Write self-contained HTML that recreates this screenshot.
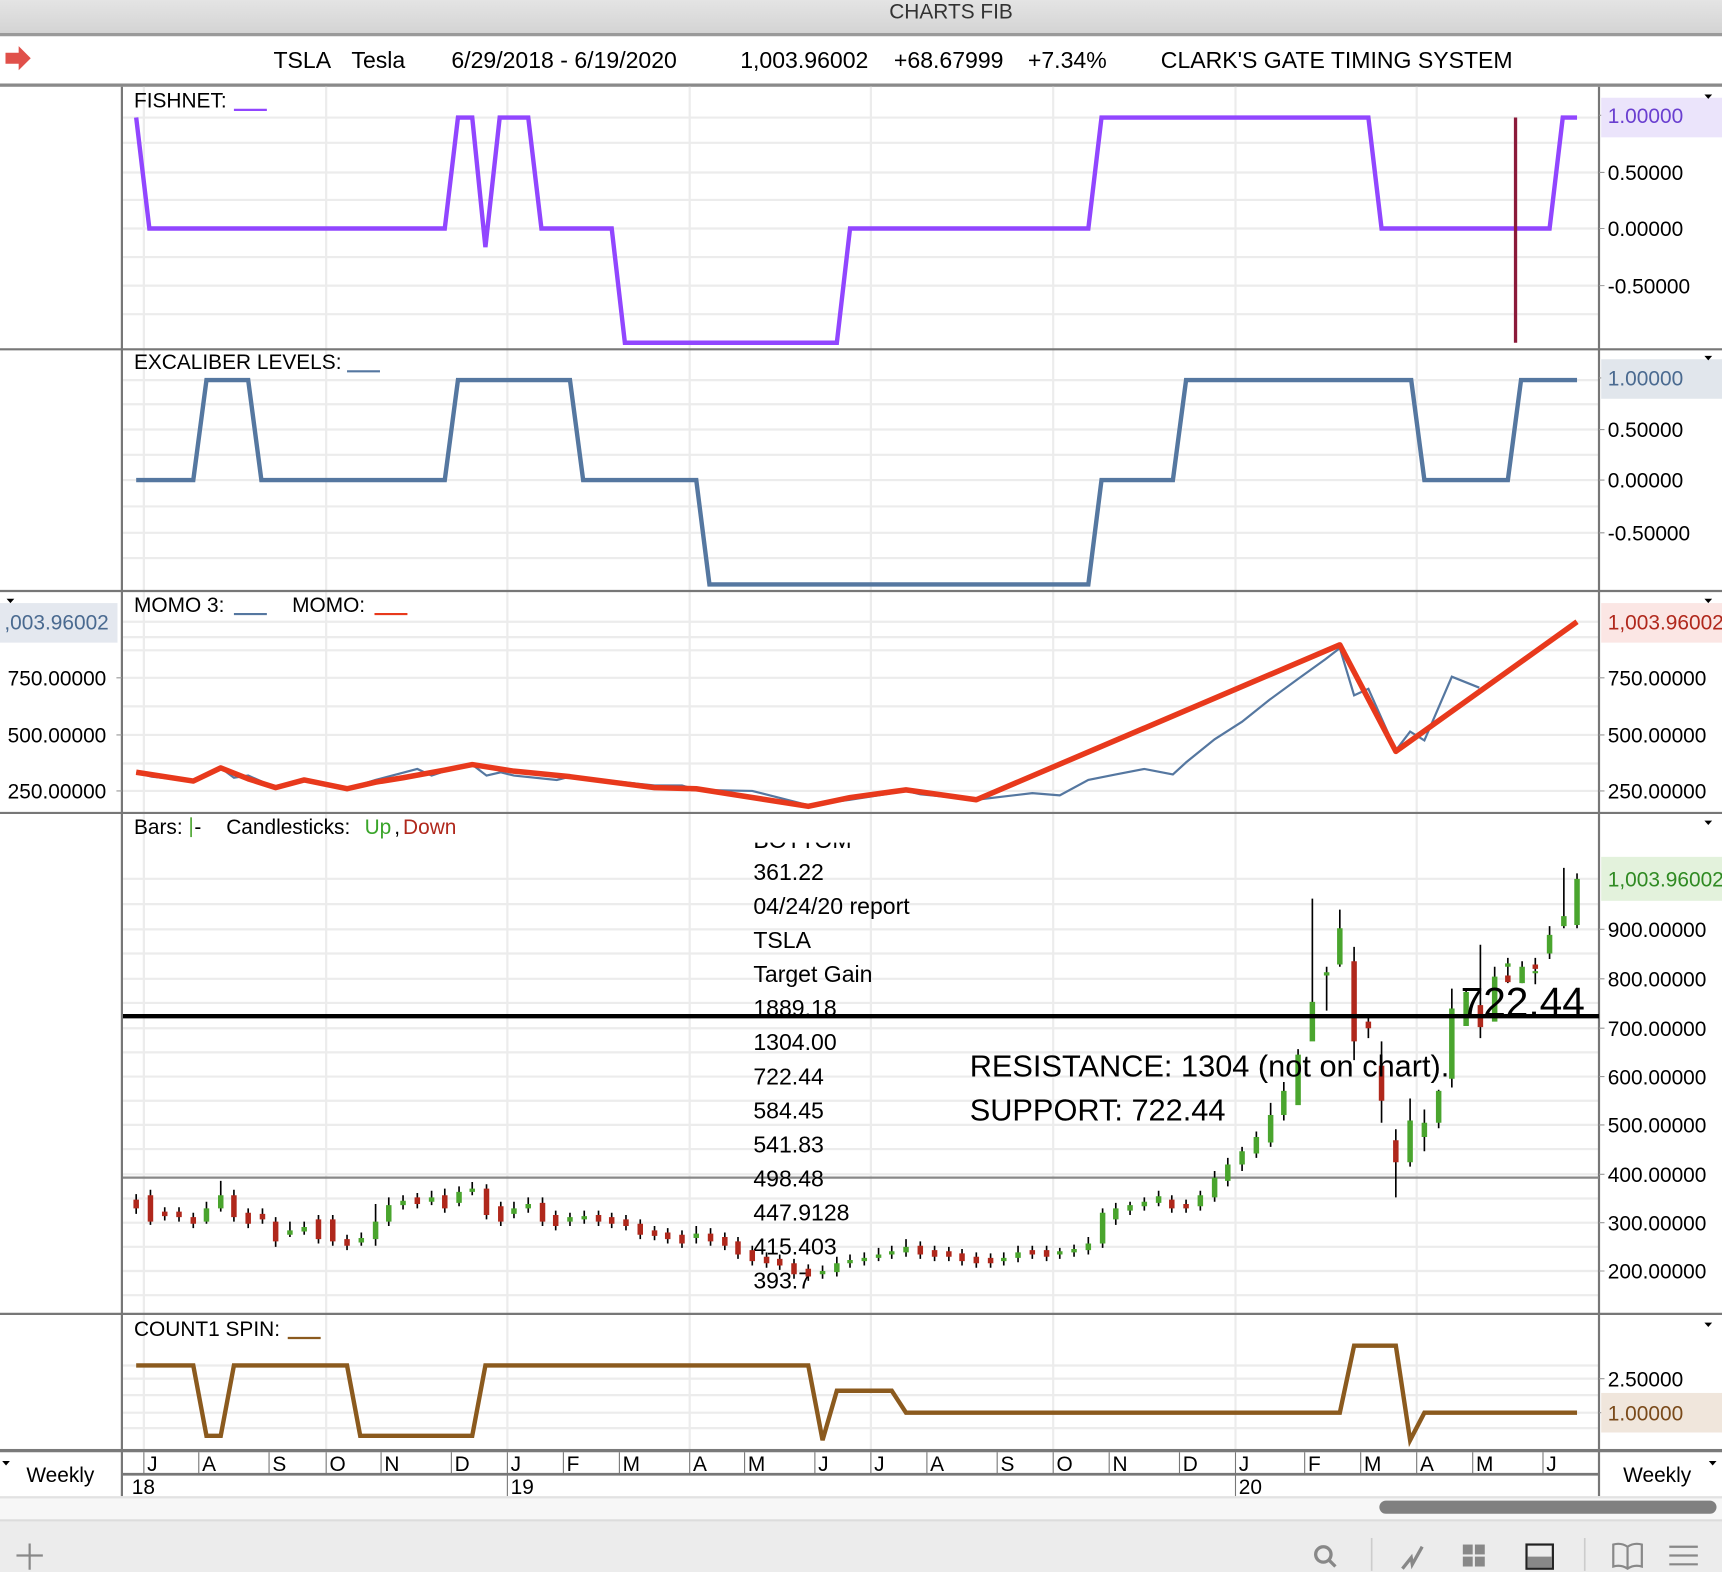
<!DOCTYPE html>
<html><head><meta charset="utf-8"><style>
html,body{margin:0;padding:0;background:#fff;overflow:hidden}
svg{display:block}
text{font-family:"Liberation Sans",Arial,sans-serif}
</style></head><body>
<svg width="1722" height="1572" viewBox="0 0 1568 1431" preserveAspectRatio="none" xmlns="http://www.w3.org/2000/svg">
<defs>
<clipPath id="pc"><rect x="112" y="767" width="1344" height="428"/></clipPath>
<linearGradient id="tb" x1="0" y1="0" x2="0" y2="1"><stop offset="0" stop-color="#e4e4e4"/><stop offset="1" stop-color="#d4d4d4"/></linearGradient>
</defs>
<!-- title bar -->
<rect x="0" y="0" width="1568" height="30" fill="url(#tb)"/>
<text x="866" y="17" font-size="19" text-anchor="middle" fill="#333">CHARTS FIB</text>
<rect x="0" y="30" width="1568" height="3" fill="#9a9a9a"/>
<!-- header -->
<path d="M5 48h12v-6l11 11-11 11v-6H5z" fill="#e0504a"/>
<g font-size="21" fill="#000">
<text x="249" y="62">TSLA</text><text x="320" y="62">Tesla</text>
<text x="411" y="62">6/29/2018 - 6/19/2020</text>
<text x="674" y="62">1,003.96002</text><text x="814" y="62">+68.67999</text><text x="936" y="62">+7.34%</text>
<text x="1057" y="62">CLARK'S GATE TIMING SYSTEM</text>
</g>
<rect x="0" y="76" width="1568" height="3" fill="#8a8a8a"/>

<!-- grid -->
<g stroke="#ececec" stroke-width="2">
<path d="M131 79V1320M297 79V1320M462 79V1320M628 79V1320M793 79V1320M959 79V1320M1125 79V1320M1290 79V1320"/>
<path d="M112 107H1456M112 130H1456M112 157H1456M112 182H1456M112 208H1456M112 234H1456M112 260H1456M112 286H1456M112 346H1456M112 368H1456M112 391H1456M112 414H1456M112 437H1456M112 461H1456M112 485H1456M112 508H1456M112 566H1456M112 580H1456M112 592H1456M112 617H1456M112 643H1456M112 669H1456M112 695H1456M112 720H1456"/>
<path d="M112 800H1456M112 823H1456M112 846H1456M112 868H1456M112 891H1456M112 913H1456M112 936H1456M112 958H1456M112 980H1456M112 1002H1456M112 1024H1456M112 1046H1456M112 1069H1456M112 1091H1456M112 1113H1456M112 1135H1456M112 1157H1456M112 1179H1456"/>
<path d="M112 1243H1456M112 1255H1456M112 1270H1456M112 1286H1456M112 1300H1456"/>
</g>

<!-- panel frames -->
<g stroke="#777" stroke-width="2" fill="none">
<path d="M111 79V1362M1456 79V1362"/>
<path d="M0 318H1568M0 538H1568M0 740H1568M0 1196H1568"/>
</g>
<rect x="0" y="1319" width="1568" height="3" fill="#7a7a7a"/>

<!-- right axis tick marks -->
<g stroke="#999" stroke-width="1"><path d="M1456 105h5M1456 157h5M1456 208h5M1456 260h5M1456 344h5M1456 391h5M1456 437h5M1456 485h5M1456 617h5M1456 669h5M1456 720h5M1456 846h5M1456 891h5M1456 936h5M1456 980h5M1456 1024h5M1456 1069h5M1456 1113h5M1456 1157h5M1456 1255h5M1456 1286h5M106 617h5M106 669h5M106 720h5"/></g>

<!-- Panel 1 -->
<text x="122" y="98" font-size="19">FISHNET:</text><path d="M213 100h30" stroke="#9146ff" stroke-width="2"/>
<polyline fill="none" stroke="#9146ff" stroke-width="4" points="124,107 136,208 405,208 417,107 430,107 442,225 455,107 481,107 493,208 557,208 569,312 762,312 774,208 991,208 1003,107 1246,107 1258,208 1411,208 1423,107 1436,107"/>
<path d="M1380 107V312" stroke="#8b1a3a" stroke-width="3"/>
<rect x="1458" y="89" width="110" height="36" fill="#ebe4fb"/>
<g font-size="19"><text x="1464" y="112" fill="#6a3fd0">1.00000</text><text x="1464" y="164">0.50000</text><text x="1464" y="215">0.00000</text><text x="1464" y="267">-0.50000</text></g>
<path d="M1552 86h7l-3.5 4z" fill="#000"/>

<!-- Panel 2 -->
<text x="122" y="336" font-size="19">EXCALIBER LEVELS:</text><path d="M316 338h30" stroke="#5577a0" stroke-width="2"/>
<polyline fill="none" stroke="#5577a0" stroke-width="4" points="124,437 176,437 188,346 226,346 238,437 405,437 417,346 519,346 531,437 634,437 646,532 991,532 1003,437 1068,437 1080,346 1285,346 1297,437 1373,437 1385,346 1436,346"/>
<rect x="1458" y="327" width="110" height="36" fill="#e1e6ec"/>
<g font-size="19"><text x="1464" y="351" fill="#4a6a90">1.00000</text><text x="1464" y="398">0.50000</text><text x="1464" y="444">0.00000</text><text x="1464" y="492">-0.50000</text></g>
<path d="M1552 324h7l-3.5 4z" fill="#000"/>

<!-- Panel 3 -->
<text x="122" y="557" font-size="19">MOMO 3:</text><path d="M213 559h30" stroke="#5577a0" stroke-width="2"/>
<text x="266" y="557" font-size="19">MOMO:</text><path d="M341 559h30" stroke="#e8391c" stroke-width="2"/>
<polyline fill="none" stroke="#5577a0" stroke-width="2" points="124,703 138,707 176,711 201,699 213,708 226,706 251,717 277,711 316,718 342,710 380,700 393,706 405,702 430,696 443,706 456,703 468,706 507,710 519,707 596,715 621,715 634,719 685,720 736,733 774,728 825,720 838,723 889,728 940,722 965,724 991,710 1016,705 1042,700 1068,705 1080,694 1106,673 1131,657 1156,637 1182,618 1207,600 1220,590 1233,633 1246,627 1271,683 1284,666 1297,674 1322,616 1347,626"/>
<polyline fill="none" stroke="#e8391c" stroke-width="5" stroke-linejoin="round" points="124,703 176,711 201,699 226,709 251,717 277,710 316,718 342,712 367,708 405,701 430,696 468,702 519,707 596,717 634,718 736,734 774,726 825,719 889,728 1220,587 1271,684 1436,566"/>
<rect x="0" y="549" width="107" height="36" fill="#e4e8ef"/>
<rect x="1458" y="549" width="110" height="36" fill="#fbe6e4"/>
<g font-size="19"><text x="4" y="573" fill="#4a6a90">,003.96002</text><text x="7" y="624">750.00000</text><text x="7" y="676">500.00000</text><text x="7" y="727">250.00000</text>
<text x="1464" y="573" fill="#b0281c">1,003.96002</text><text x="1464" y="624">750.00000</text><text x="1464" y="676">500.00000</text><text x="1464" y="727">250.00000</text></g>
<path d="M6 545h7l-3.5 4z M1552 545h7l-3.5 4z" fill="#000"/>

<!-- Panel 4 -->
<g font-size="19"><text x="122" y="759">Bars:</text><path d="M174 744v18" stroke="#4aa52e" stroke-width="1.5"/><text x="177" y="759">-</text>
<text x="206" y="759">Candlesticks:</text><text x="332" y="759" fill="#3aa52a">Up</text><text x="359" y="759">,</text><text x="367" y="759" fill="#b0281c">Down</text></g>
<path d="M1552 747h7l-3.5 4z" fill="#000"/>
<path d="M112 1072H1456" stroke="#888" stroke-width="2"/>
<g clip-path="url(#pc)" font-size="21">
<text x="686" y="772">BOTTOM</text><text x="686" y="801">361.22</text><text x="686" y="832">04/24/20 report</text><text x="686" y="863">TSLA</text><text x="686" y="894">Target Gain</text><text x="686" y="925">1889.18</text><text x="686" y="956">1304.00</text><text x="686" y="987">722.44</text><text x="686" y="1018">584.45</text><text x="686" y="1049">541.83</text><text x="686" y="1080">498.48</text><text x="686" y="1111">447.9128</text><text x="686" y="1142">415.403</text><text x="686" y="1173">393.7</text>
</g>
<!-- wicks -->
<path stroke="#000" stroke-width="1.5" fill="none" d="M124 1087v18M137 1083v32M150 1099v12M163 1099v13M176 1104v14M188 1094v20M201 1075v28M213 1083v29M226 1100v18M239 1100v14M251 1108v27M264 1112v14M277 1112v12M290 1106v26M303 1106v28M316 1124v14M329 1122v12M342 1096v38M354 1090v26M367 1088v13M380 1086v14M393 1084v13M405 1082v22M418 1080v18M430 1076v12M443 1078v32M456 1094v22M468 1094v15M481 1090v14M494 1090v26M506 1102v18M519 1104v12M532 1102v12M545 1102v14M557 1104v14M570 1106v14M583 1110v18M596 1116v13M608 1118v14M621 1120v16M634 1116v16M647 1118v16M660 1122v16M672 1126v20M685 1134v18M698 1140v14M710 1142v14M723 1146v18M736 1151v15M749 1152v12M762 1144v18M774 1142v12M787 1140v12M800 1136v12M812 1134v12M825 1128v16M838 1130v16M851 1134v14M864 1135v13M876 1137v15M889 1140v14M902 1141v13M914 1140v12M927 1134v15M940 1134v12M953 1134v14M965 1136v10M978 1133v11M991 1126v16M1004 1100v36M1016 1095v20M1029 1094v12M1042 1090v12M1055 1084v14M1067 1088v16M1080 1092v12M1093 1084v18M1106 1066v28M1118 1054v26M1131 1044v22M1144 1030v24M1157 1004v40M1169 985v35M1182 955v44M1195 818v127M1208 880v40M1220 828v52M1233 862v103M1246 925v20M1258 948v74M1271 1028v62M1284 1000v62M1297 1010v38M1310 992v35M1322 900v90M1335 900v34M1348 860v85M1361 880v30M1373 872v23M1386 875v20M1398 872v24M1411 843v30M1424 790v55M1436 795v50"/>
<!-- green bodies -->
<path stroke="#4aa52e" stroke-width="5" fill="none" d="M188 1112V1100M201 1100V1088M264 1124V1120M277 1121V1117M329 1131V1127M342 1128V1112M354 1112V1097M367 1097V1093M393 1094V1090M418 1095V1085M430 1085V1082M468 1105V1100M481 1100V1096M519 1112V1108M532 1110V1107M634 1127V1123M749 1160V1157M762 1158V1150M774 1150V1147M787 1148V1145M800 1145V1142M812 1142V1139M825 1140V1135M914 1148V1145M927 1145V1140M965 1142V1139M978 1140V1137M991 1138V1132M1004 1132V1104M1016 1110V1100M1029 1102V1097M1042 1098V1094M1055 1095V1089M1093 1098V1088M1106 1090V1072M1118 1075V1060M1131 1060V1048M1144 1050V1035M1157 1040V1015M1169 1015V993M1182 1006V960M1195 948V912M1208 888V885M1220 878V845M1284 1058V1020M1297 1035V1022M1310 1022V993M1322 982V918M1335 934V903M1361 930V889M1373 880V877M1386 895V880M1398 886V884M1411 868V851M1424 843V834M1436 842V800"/>
<!-- red bodies -->
<path stroke="#b0281c" stroke-width="5" fill="none" d="M124 1092V1100M137 1088V1112M150 1103V1107M163 1103V1108M176 1108V1114M213 1088V1108M226 1104V1114M239 1105V1110M251 1112V1130M290 1110V1128M303 1110V1130M316 1128V1134M380 1090V1096M405 1088V1100M443 1082V1106M456 1098V1112M494 1095V1112M506 1106V1116M545 1106V1112M557 1108V1114M570 1110V1116M583 1114V1124M596 1120V1125M608 1122V1128M621 1124V1132M647 1123V1130M660 1126V1134M672 1130V1142M685 1138V1148M698 1144V1150M710 1146V1152M723 1150V1160M736 1155V1162M838 1134V1142M851 1138V1144M864 1139V1144M876 1141V1148M889 1144V1150M902 1145V1150M940 1138V1142M953 1138V1144M1067 1092V1100M1080 1096V1100M1233 875V948M1246 930V936M1258 970V1002M1271 1038V1058M1348 915V935M1373 888V894M1398 878V882"/>
<path d="M112 925H1456" stroke="#000" stroke-width="4"/>
<text x="883" y="980" font-size="28">RESISTANCE: 1304 (not on chart).</text>
<text x="883" y="1020" font-size="28">SUPPORT: 722.44</text>
<text x="1330" y="925" font-size="37">722.44</text>
<rect x="1458" y="780" width="110" height="40" fill="#e3f2dc"/>
<g font-size="19"><text x="1464" y="807" fill="#2f8a22">1,003.96002</text><text x="1464" y="853">900.00000</text><text x="1464" y="898">800.00000</text><text x="1464" y="943">700.00000</text><text x="1464" y="987">600.00000</text><text x="1464" y="1031">500.00000</text><text x="1464" y="1076">400.00000</text><text x="1464" y="1120">300.00000</text><text x="1464" y="1164">200.00000</text></g>

<!-- Panel 5 -->
<text x="122" y="1216" font-size="19">COUNT1 SPIN:</text><path d="M262 1218h30" stroke="#8b5a1e" stroke-width="2"/>
<polyline fill="none" stroke="#8b5a1e" stroke-width="4" points="124,1243 176,1243 188,1307 201,1307 213,1243 316,1243 328,1307 430,1307 442,1243 736,1243 749,1311 762,1266 812,1266 825,1286 1220,1286 1233,1225 1271,1225 1284,1311 1297,1286 1436,1286"/>
<rect x="1458" y="1268" width="110" height="36" fill="#f0e6dc"/>
<g font-size="19"><text x="1464" y="1262">2.50000</text><text x="1464" y="1293" fill="#7a4a1a">1.00000</text></g>
<path d="M1552 1204h7l-3.5 4z" fill="#000"/>

<!-- axis row -->
<path d="M112 1342H1456" stroke="#777" stroke-width="2.5"/>
<g stroke="#777" stroke-width="1"><path d="M131 1322v20M181 1322v20M245 1322v20M297 1322v20M347 1322v20M411 1322v20M462 1322v40M513 1322v20M564 1322v20M628 1322v20M678 1322v20M742 1322v20M793 1322v20M844 1322v20M908 1322v20M959 1322v20M1010 1322v20M1074 1322v20M1125 1322v40M1188 1322v20M1239 1322v20M1290 1322v20M1341 1322v20M1405 1322v20"/></g>
<g font-size="19"><text x="134" y="1339">J</text><text x="184" y="1339">A</text><text x="248" y="1339">S</text><text x="300" y="1339">O</text><text x="350" y="1339">N</text><text x="414" y="1339">D</text><text x="465" y="1339">J</text><text x="516" y="1339">F</text><text x="567" y="1339">M</text><text x="631" y="1339">A</text><text x="681" y="1339">M</text><text x="745" y="1339">J</text><text x="796" y="1339">J</text><text x="847" y="1339">A</text><text x="911" y="1339">S</text><text x="962" y="1339">O</text><text x="1013" y="1339">N</text><text x="1077" y="1339">D</text><text x="1128" y="1339">J</text><text x="1191" y="1339">F</text><text x="1242" y="1339">M</text><text x="1293" y="1339">A</text><text x="1344" y="1339">M</text><text x="1408" y="1339">J</text>
<text x="120" y="1360">18</text><text x="465" y="1360">19</text><text x="1128" y="1360">20</text>
<text x="24" y="1349">Weekly</text><text x="1478" y="1349">Weekly</text></g>
<path d="M2 1330h7l-3.5 4z M1556 1330h7l-3.5 4z" fill="#000"/>

<!-- scroll -->
<rect x="0" y="1362" width="1568" height="23" fill="#f7f7f7"/>
<rect x="0" y="1362" width="1568" height="2" fill="#e2e2e2"/>
<rect x="1256" y="1366" width="307" height="12" rx="6" fill="#808080"/>
<rect x="0" y="1383" width="1568" height="2" fill="#dcdcdc"/>
<rect x="0" y="1385" width="1568" height="46" fill="#ececec"/>
<!-- toolbar icons -->
<g stroke="#888" fill="none" stroke-width="2">
<path d="M27 1405v24M15 1416h24"/>
<circle cx="1205" cy="1415" r="7" stroke-width="3"/><path d="M1210 1420l6 6" stroke-width="3"/>
<path d="M1249 1400v30M1443 1400v30" stroke="#ccc" stroke-width="1.5"/>
<path d="M1277 1428l8-10 1 6 9-16" stroke-width="3"/>
<path d="M1469 1406q7-2 13 2q6-4 13-2v20q-7-2-13 2q-6-4-13-2zM1482 1408v20"/>
<path d="M1520 1408h26M1520 1416h26M1520 1424h26"/>
</g>
<g fill="#888"><rect x="1332" y="1406" width="9" height="9"/><rect x="1343" y="1406" width="9" height="9"/><rect x="1332" y="1417" width="9" height="9"/><rect x="1343" y="1417" width="9" height="9"/></g>
<rect x="1390" y="1406" width="24" height="22" fill="none" stroke="#222" stroke-width="2"/><rect x="1391" y="1417" width="22" height="10" fill="#888"/>
</svg>
</body></html>
